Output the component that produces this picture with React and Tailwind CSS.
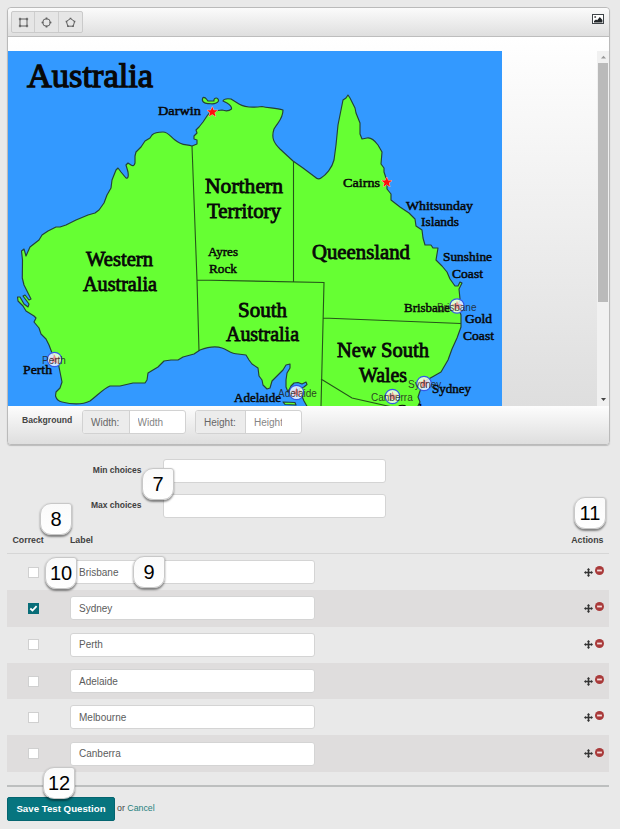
import React from "react";

const COAST =
  "M210,112 L207,116 L203,122 L199,127 L196,130 L197,133 L194,136 L194,139 L197,140 L197,144 L192,146 C186,144 182,146 175,140 C170,136 168,132 163,132 C158,132 154,133 152,135 L150,138 L145,141 L141,147 L136,152 L135,156 L135,163 Q134,167 131,165 L128,163 L126,165 L128,172 Q129,179 126,178 L121,172 L118,168 L116,170 L112,180 L111,188 L107,195 L104,203 L99,210 L95,213 L88,215 L76,220 L66,225 L60,227 L56,227 L48,231 L42,235 L39,240 L30,247 L26,256 L24,249 L21.5,251 L22.5,260 L22.3,278 L24,285 L28,293 L31,299 L29,300 L25,295 L23,296 L29,304 L28,307 L24,304 L20,297 L17.5,297 L18,301 L23,306 L26,311 L34,316 L36,318 L34,322 L39,328 L41,334 L46,339 L49,345 L52,353 L58,362 L60,372 L62,382 L60,388 L56,392 L55.5,396 Q57,401 62,402 C70,404 82,405 90,401 C98,395 103,389 110,386 L120,386 L133,383 L145,383 L147,380 L148,373 L158,367 L164,361 L171,360 L178,360 L183,357 L194,354 L200,350 C208,347 216,346 222,348 C228,350 231,354 238,354 L246,355 L249,360 L252,364 L258,368 L259,376 L262,380 L263,385 L267,389 L270,388 L272,381 L279,374 L283,370 L286,365 L290,364 L290,368 L287,373 L286,380 L286,387 L288,392 L291,386 L294,383 L298,382.5 L302,384 L306,382 L307,384.5 L304,387 L299,389 L301,394 L304,401 L308,408 L417,408 L420,402 L418,397 L420,391 L425,381 L434,376 L441,372 L448,360 L452,349 L457,338 L461,327 L461,315 L458,306 L460,299 L459,289 L462,283 L460,282 L458,286 L455,286 L450,279 L447,272 L442,266 L436,260 L438,248 L433,248 L431,245 L425,245 L423,238 L422,230 L416,226 L415,219 L409,213 L400,207 L391,200 L391,194 L387,189 L387,181 L384,172 L384,168 L381,164 L382,152 L378,145 Q372,137 367,138 L362,139 L360,134 L360,123 L356,113 L355,108 L350,98 L348,95 L346,98 L343,100 L341,110 L338,125 L336,145 L334,160 C332,168 326,175 321,178 Q318,180 315,177 L303,168 L293,161 L280,149 C274,143 271,138 274,129 C278,122 283,119 283,110 C276,108 268,108 262,106.5 C251,108 244,107 239,104 L231,99 Q224,98 223,101 L227,103 Q232,106 231.5,109 Q228,112 222,110 L214,111 Z";

const TITLES = [
  [27, 87, 126, 34.5, "Australia"],
  [205, 193, 78, 20.5, "Northern"],
  [207, 218, 74, 20.5, "Territory"],
  [86, 266, 67, 20.5, "Western"],
  [83, 291, 74, 20.5, "Australia"],
  [312, 259, 98, 20.5, "Queensland"],
  [238, 317, 49, 20.5, "South"],
  [226, 341, 73, 20.5, "Australia"],
  [337, 357, 92, 20.5, "New South"],
  [359, 382, 48, 20.5, "Wales"],
  [158, 115, 43, 13.5, "Darwin"],
  [343, 187, 37, 13.5, "Cairns"],
  [406, 210, 67, 13.5, "Whitsunday"],
  [421, 226, 38, 13.5, "Islands"],
  [208, 256, 30, 13.5, "Ayres"],
  [209, 273, 28, 13.5, "Rock"],
  [443, 261, 49, 13.5, "Sunshine"],
  [452, 278, 31, 13.5, "Coast"],
  [404, 312, 46, 13.5, "Brisbane"],
  [465, 323, 27, 13.5, "Gold"],
  [463, 340, 31, 13.5, "Coast"],
  [432, 393, 39, 13.5, "Sydney"],
  [23, 374, 29, 13.5, "Perth"],
  [234, 402, 47, 13.5, "Adelaide"],
  [397, 413, 50, 13.5, "Canberra"],
];

const PINS = [
  [54.5, 359.5, 42, 364, "Perth"],
  [296.5, 392.5, 278, 397, "Adelaide"],
  [392.5, 396.5, 371, 401, "Canberra"],
  [424, 383.5, 408, 388, "Sydney"],
  [457, 306, 437, 311, "Brisbane"],
];

const STAR = "M0,-5.3 L1.4,-1.7 L5.2,-1.7 L2.2,.7 L3.3,4.4 L0,2.2 L-3.3,4.4 L-2.2,.7 L-5.2,-1.7 L-1.4,-1.7 Z";

function AustraliaMap() {
  return (
    <svg className="block h-[355px] w-[494px] shrink-0" viewBox="8 51 494 355">
      <rect x="8" y="51" width="494" height="355" fill="#3399ff" />
      <g fill="#66ff33" stroke="#244238" strokeWidth="1.15" strokeLinejoin="round">
        <path d={COAST} />
        <path d="M203,97.5 C201,101 204,104 209,103.5 C215,105 219,102 218.5,100 C217,96 213,99 214,101 L208,101 C206,99 206,97 203,97.5 Z" />
        <path d="M283,402 L295,402.5 L296,405 L285,404.5 Z" />
      </g>
      <g fill="none" stroke="#25551a" strokeWidth="1.1">
        <path d="M192,146 L197,280 L199,351 M197,280 L324,282.5 L321,407 M293.5,161 V281.5 M323,318 L461,323.5 M321,379 L352,398 L392,407" />
      </g>
      <g fill="#080808" stroke="#080808" fontFamily="'Liberation Serif', serif">
        {TITLES.map(([x, y, w, size, label]) => (
          <text key={`${x}-${y}`} x={x} y={y} fontSize={size} strokeWidth={size > 30 ? 1.3 : size > 20 ? 0.8 : 0.5} textLength={w} lengthAdjust="spacingAndGlyphs">
            {label}
          </text>
        ))}
      </g>
      {[[212.3, 112], [386.7, 182.3]].map(([x, y]) => (
        <path key={x} d={STAR} transform={`translate(${x} ${y})`} fill="#ff0d0d" stroke="#ffc9b0" strokeWidth="1" paintOrder="stroke" />
      ))}
      {PINS.map(([cx, cy, x, y, label]) => (
        <g key={label}>
          <circle cx={cx} cy={cy} r="7.2" fill="#ffffff" fillOpacity=".78" stroke="#3459e6" strokeWidth="1.2" />
          <path d={STAR} transform={`translate(${cx} ${cy})`} fill="#f0777c" fillOpacity=".75" />
          <text x={x} y={y} fontSize="10" fontFamily="'Liberation Sans', sans-serif" fill="#202020" fillOpacity=".85">
            {label}
          </text>
        </g>
      ))}
    </svg>
  );
}

function ShapeButton({ children, last }) {
  return (
    <span className={`flex w-[23.5px] items-center justify-center ${last ? "" : "border-r border-[#cecece]"}`}>
      <svg className="size-[11px]" viewBox="0 0 11 11" fill="none" stroke="#606060" strokeWidth="1">
        {children}
      </svg>
    </span>
  );
}

function Toolbar() {
  return (
    <div className="flex h-[29px] shrink-0 items-start justify-between rounded-t-[2px] border-b border-[#bdbdbd] bg-linear-to-b from-[#fbfbfb] to-[#dfdfdf] pt-[3px] pr-[5px] pl-[3px]">
      <div className="flex h-[22px] w-[72px] rounded-[2px] border border-[#cacaca] bg-[#e6e6e6]">
        <ShapeButton>
          <path d="M2,2 H9 V9 H2 Z" strokeWidth="1" />
          <path d="M.8,2 H3.2 M7.8,2 H10.2 M.8,9 H3.2 M7.8,9 H10.2 M2,.8 V3.2 M9,.8 V3.2 M2,7.8 V10.2 M9,7.8 V10.2" strokeWidth="1.2" />
        </ShapeButton>
        <ShapeButton>
          <circle cx="5.5" cy="5.5" r="3.8" />
          <path d="M5.5,.6 V2.6 M5.5,8.4 V10.4 M.6,5.5 H2.6 M8.4,5.5 H10.4" strokeWidth="1.7" />
        </ShapeButton>
        <ShapeButton last>
          <path d="M5.5,1.5 L9.6,4.5 L8.2,9.2 H2.8 L1.4,4.5 Z" />
          <path d="M4.7,1.5 H6.3 M8.7,4.5 H10.3 M.7,4.5 H2.3 M2.2,9.2 H3.8 M7.2,9.2 H8.8" strokeWidth="1.6" />
        </ShapeButton>
      </div>
      <svg className="mt-[3px] h-[10px] w-[12px]" viewBox="0 0 12 10">
        <rect x=".5" y=".5" width="11" height="9" fill="#fff" stroke="#3e4347" />
        <circle cx="3.2" cy="3" r="1" fill="#555" />
        <path d="M2,8.5 V7 L4,5.5 L5.2,6.2 L7.8,3 L10.4,6 V8.5 Z" fill="#222629" />
      </svg>
    </div>
  );
}

function ScrollBar() {
  return (
    <div className="flex w-[12px] flex-col items-center justify-between bg-[#f1f1f1]">
      <svg className="h-3 w-[11px] shrink-0" viewBox="0 0 11 12">
        <path d="M3,7.5 L5.5,4.8 L8,7.5 Z" fill="#999" />
      </svg>
      <div className="h-[239px] w-[9.5px] bg-[#bababa]" />
      <div className="grow" />
      <svg className="h-3 w-[11px] shrink-0" viewBox="0 0 11 12">
        <path d="M3,4 L5.5,7 L8,4 Z" fill="#444" />
      </svg>
    </div>
  );
}

function SizeField({ label, placeholder, addon, value }) {
  return (
    <div className="flex h-[24px] overflow-hidden rounded-[3px] border border-[#d2d2d2] bg-white text-[10px] text-[#666]">
      <span className={`flex items-center border-r border-[#d2d2d2] bg-[#ececec] pl-2 ${addon}`}>{label}</span>
      <span className={`flex items-center pl-[8px] ${value}`}>
        <span className="w-full overflow-hidden whitespace-nowrap text-[#858585]">{placeholder}</span>
      </span>
    </div>
  );
}

function Footer() {
  return (
    <div className="flex h-[38px] shrink-0 items-start bg-linear-to-b from-[#fdfdfd] to-[#dedede] pt-[4px] pl-[14px]">
      <span className="mt-[4px] w-[60px] text-[8.6px] leading-[13px] font-bold text-[#444]">Background</span>
      <SizeField label="Width:" placeholder="Width" addon="w-[46.5px]" value="w-[55.5px] pr-[8px]" />
      <div className="w-[9px]" />
      <SizeField label="Height:" placeholder="Height" addon="w-[50px]" value="w-[55px] pr-[19px]" />
    </div>
  );
}

const FIELD = "h-[24px] rounded-[3px] border border-[#d4d4d4] bg-white";

function ChoiceField({ label }) {
  return (
    <div className="flex h-[35px] items-start">
      <span className="mt-[5px] w-[134.5px] text-right text-[8.5px] leading-[12px] font-bold text-[#3f3f3f]">{label}</span>
      <div className={`ml-[21.5px] w-[223px] ${FIELD}`} />
    </div>
  );
}

function AnswerRow({ label, striped, checked }) {
  return (
    <div className={`flex h-[36.3px] items-center ${striped ? "bg-[#dfdddd]" : ""}`}>
      <div className="w-[63px] pl-[21px]">
        <div className={`flex size-[11px] items-center justify-center border ${checked ? "border-[#086d78] bg-[#086d78]" : "border-[#d0d0d0] bg-white"}`}>
          {checked && (
            <svg className="size-[9px]" viewBox="0 0 9 9" fill="none" stroke="#fff" strokeWidth="1.8">
              <path d="M1.3,4.5 L3.5,6.5 L7.6,2.2" />
            </svg>
          )}
        </div>
      </div>
      <div className={`flex w-[245px] items-center pl-[8px] text-[10px] text-[#5c5c5c] ${FIELD}`}>{label}</div>
      <div className="ml-auto flex items-center gap-[2px] pr-[5px]">
        <svg className="size-[9px]" viewBox="0 0 9 9" fill="#333">
          <path d="M3.7,1.8 H2.8 L4.5,0 L6.2,1.8 H5.3 V3.7 H7.2 V2.8 L9,4.5 L7.2,6.2 V5.3 H5.3 V7.2 H6.2 L4.5,9 L2.8,7.2 H3.7 V5.3 H1.8 V6.2 L0,4.5 L1.8,2.8 V3.7 H3.7 Z" />
        </svg>
        <svg className="mb-[3px] size-[9px]" viewBox="0 0 9 9">
          <circle cx="4.5" cy="4.5" r="4.5" fill="#a93a3a" />
          <rect x="2.1" y="3.6" width="4.8" height="1.8" fill="#f4dede" />
        </svg>
      </div>
    </div>
  );
}

function Callout({ n, place }) {
  return (
    <div className={`absolute flex size-[32px] items-center justify-center rounded-[11px] rounded-tr-[3px] border border-[#c8c8c8] bg-linear-to-b from-[#fafafa] to-white text-[20px] text-black shadow-[0_1.5px_2px_rgba(0,0,0,0.45)] ${place}`}>
      {n}
    </div>
  );
}

const ANSWERS = ["Brisbane", "Sydney", "Perth", "Adelaide", "Melbourne", "Canberra"];

export default function App() {
  return (
    <div className="relative h-[829px] w-[620px] overflow-hidden bg-[#e9e9e9] px-[7px] pt-[7px] font-['Liberation_Sans',Arial,sans-serif]">
      <div className="flex h-[438px] w-[603px] flex-col overflow-hidden rounded-[4px] border border-[#bababa] shadow-[0_1px_1px_#bbb]">
        <Toolbar />
        <div className="flex grow flex-col bg-linear-to-b from-white to-[#dedede]">
          <div className="h-[14px] shrink-0" />
          <div className="flex h-[355px] justify-between">
            <AustraliaMap />
            <ScrollBar />
          </div>
        </div>
        <Footer />
      </div>

      <div className="mt-[14px] h-[70px]">
        <ChoiceField label="Min choices" />
        <ChoiceField label="Max choices" />
      </div>

      <div className="w-[602px]">
        <div className="flex h-[25px] items-start border-b border-[#d6d6d6] pt-[5px] text-[8.8px] leading-[12px] font-bold text-[#3f3f3f]">
          <span className="w-[63px] pl-[5.5px]">Correct</span>
          <span>Label</span>
          <span className="ml-auto pr-[5.5px]">Actions</span>
        </div>
        {ANSWERS.map((label, i) => (
          <AnswerRow key={label} label={label} striped={i % 2 === 1} checked={i === 1} />
        ))}
      </div>

      <div className="mt-[13px] w-[602px] border-b-2 border-[#bdbfbf]" />
      <div className="mt-[10px] flex items-center text-[8.8px] text-[#444]">
        <button className="h-[24px] w-[108px] rounded-[2px] border border-[#056570] bg-[#07757f] text-[9.7px] font-bold whitespace-nowrap text-white">
          Save Test Question
        </button>
        <span className="ml-[2px]">or</span>
        <a className="ml-[2.5px] text-[#267f7e]">Cancel</a>
      </div>

      <Callout n="7" place="left-[142px] top-[468px]" />
      <Callout n="8" place="left-[40px] top-[503px]" />
      <Callout n="9" place="left-[133px] top-[556px]" />
      <Callout n="10" place="left-[45px] top-[557px]" />
      <Callout n="11" place="left-[574px] top-[497px]" />
      <Callout n="12" place="left-[43px] top-[767px]" />
    </div>
  );
}
